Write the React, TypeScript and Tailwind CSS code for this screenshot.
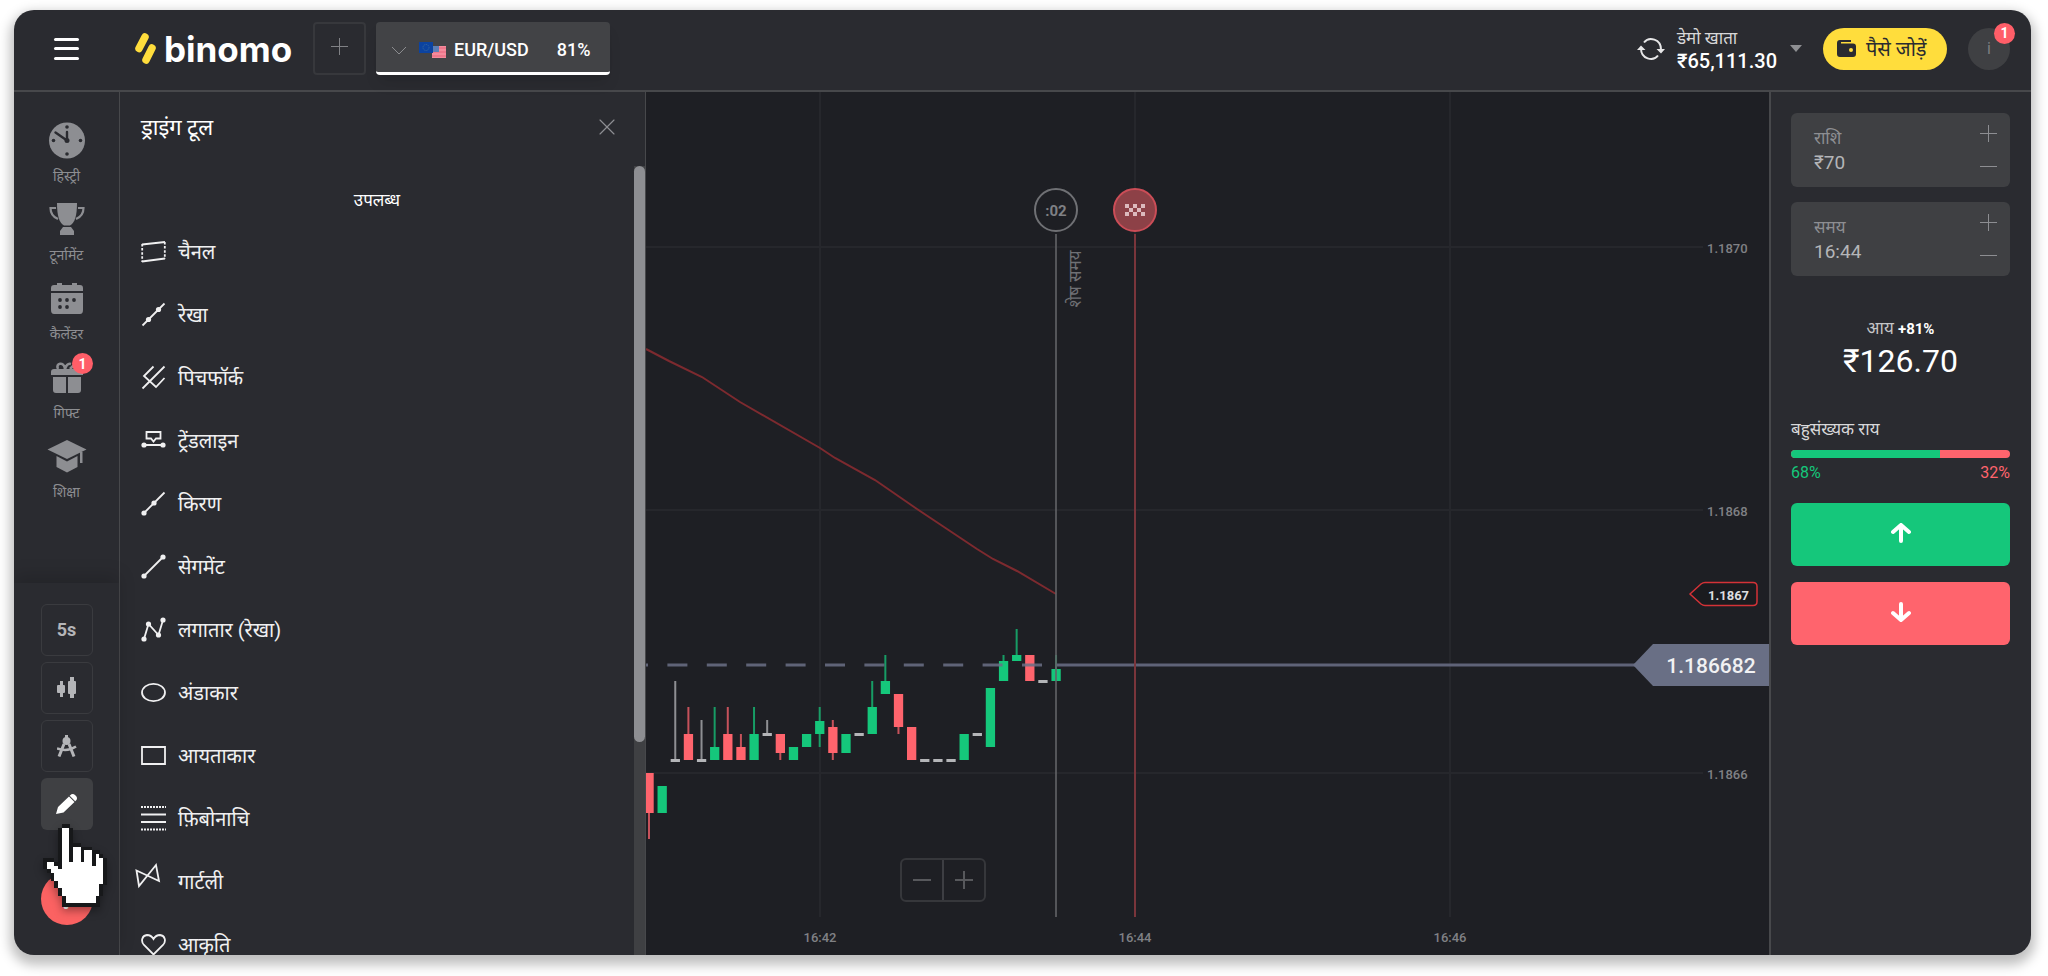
import React, { useState } from 'react';
import { FiX } from 'react-icons/fi';

type Candle = {
  color: 'up' | 'down' | 'flat';
  high: number;
  top: number;
  bottom: number;
  low: number;
};

const UP = '#15c77b';
const DOWN = '#ff646d';

const c = (
  color: Candle['color'],
  high: number,
  top: number,
  bottom: number,
  low: number
): Candle => ({ color, high, top, bottom, low });

const candles: Candle[] = [
  c('down', 681, 681, 721, 747),
  c('up', 694, 694, 721, 721),
  c('flat', 589, 668, 668, 668),
  c('down', 615, 642, 668, 668),
  c('flat', 628, 668, 668, 668),
  c('up', 615, 655, 668, 668),
  c('down', 615, 642, 668, 668),
  c('down', 642, 655, 668, 668),
  c('up', 615, 642, 668, 668),
  c('flat', 628, 642, 642, 642),
  c('down', 642, 642, 661, 668),
  c('up', 655, 655, 668, 668),
  c('up', 642, 642, 655, 655),
  c('up', 615, 629, 642, 655),
  c('down', 628, 635, 661, 668),
  c('up', 642, 642, 661, 661),
  c('flat', 642, 642, 642, 642),
  c('up', 589, 615, 642, 642),
  c('up', 563, 589, 602, 602),
  c('down', 602, 602, 635, 642),
  c('down', 635, 635, 668, 668),
  c('flat', 668, 668, 668, 668),
  c('flat', 668, 668, 668, 668),
  c('flat', 668, 668, 668, 668),
  c('up', 642, 642, 668, 668),
  c('flat', 642, 642, 642, 642),
  c('up', 596, 596, 655, 655),
  c('up', 563, 569, 589, 589),
  c('up', 537, 563, 569, 569),
  c('down', 563, 563, 589, 589),
  c('flat', 589, 589, 589, 589),
  c('up', 563, 577, 589, 589),
];

const candleColors = { up: UP, down: DOWN, flat: '#b4b5b8' };

const Dot = ({ x, y }: { x: number; y: number }) => (
  <circle cx={x} cy={y} r="2.6" fill="currentColor" stroke="none" />
);

const tools = [
  {
    name: 'चैनल',
    icon: (
      <>
        <path d="M1 5.5 24 3M1 22.5l23-3" />
        <path d="M1.2 5v18M23.8 3v17" strokeDasharray="2.5 1.6" />
      </>
    ),
  },
  {
    name: 'रेखा',
    icon: (
      <>
        <path d="M1.5 23.5l22-22" />
        <Dot x={7.5} y={17.5} />
        <Dot x={17.5} y={7.5} />
      </>
    ),
  },
  {
    name: 'पिचफॉर्क',
    icon: <path d="M1.5 23.5l22-22M12.5 1.5L3 11l12 11 8.500-9" />,
  },
  {
    name: 'ट्रेंडलाइन',
    icon: (
      <>
        <path d="M2 17h21M5.500 4h14v6.500h-4.500l-2.500 3-2.500-3h-4.500z" />
        <Dot x={3} y={17} />
        <Dot x={22} y={17} />
      </>
    ),
  },
  {
    name: 'किरण',
    icon: (
      <>
        <path d="M2.500 22.500l21-21" />
        <Dot x={3} y={22} />
        <Dot x={13} y={12} />
      </>
    ),
  },
  {
    name: 'सेगमेंट',
    icon: (
      <>
        <path d="M3 22L22 3" />
        <Dot x={3} y={22} />
        <Dot x={22} y={3} />
      </>
    ),
  },
  {
    name: 'लगातार (रेखा)',
    icon: (
      <>
        <path d="M3 22L7.500 7l10 11L22 3" />
        <Dot x={3} y={22} />
        <Dot x={7.5} y={7} />
        <Dot x={17.5} y={18} />
        <Dot x={22} y={3} />
      </>
    ),
  },
  { name: 'अंडाकार', icon: <ellipse cx="12.5" cy="12.5" rx="11.5" ry="8.700" /> },
  { name: 'आयताकार', icon: <path d="M1 4h23v17H1z" /> },
  {
    name: 'फ़िबोनाचि',
    icon: (
      <>
        <path d="M0 8.500h25M0 16h25" />
        <path d="M0 1h25M0 23.500h25" strokeDasharray="2 1" />
      </>
    ),
  },
  {
    name: 'गार्टली',
    icon: <path d="M-4.500 1.500L18 12 15-4-2 17z" strokeLinejoin="miter" />,
  },
  {
    name: 'आकृति',
    icon: (
      <path d="M12.500 22.500L3 13C-.5 9 1 3.500 6 3c3 0 5 1.500 6.500 4C14 4.500 16 3 19 3c5 .5 6.500 6 3 10z" />
    ),
  },
];

const menu = [
  {
    name: 'हिस्ट्री',
    badge: 0,
    icon: (
      <>
        <circle cx="20" cy="20.500" r="18" />
        <g fill="#2a2b30">
          <circle cx="20" cy="7" r="1.800" />
          <circle cx="20" cy="34" r="1.800" />
          <circle cx="6.500" cy="20.500" r="1.800" />
          <circle cx="33.500" cy="20.500" r="1.800" />
          <circle cx="20" cy="20.500" r="2.500" />
        </g>
        <path
          d="M20 20.500V12M20 20.500L8.500 12.500"
          stroke="#2a2b30"
          strokeWidth="2.400"
          strokeLinecap="round"
        />
      </>
    ),
  },
  {
    name: 'टूर्नामेंट',
    badge: 0,
    icon: (
      <>
        <path d="M10 4h20c0 12-2 20-7 22.500h-6C12 24 10 16 10 4z" />
        <path d="M16 28h8l3 4v4H13v-4z" />
        <path
          d="M9 9H3.500c0 6 2.500 9 7.500 11M31 9h5.500c0 6-2.500 9-7.500 11"
          fill="none"
          stroke="currentColor"
          strokeWidth="2.200"
        />
      </>
    ),
  },
  {
    name: 'कैलेंडर',
    badge: 0,
    icon: (
      <g transform="translate(0 2)">
        <path d="M4 11V8q0-3 3-3h3V3h5v2h10V3h5v2h3q3 0 3 3v3z" />
        <path d="M4 13h32v17q0 4-3 4H7q-3 0-3-4z" />
        <g fill="#2a2b30">
          <circle cx="13" cy="20" r="1.900" />
          <circle cx="20" cy="20" r="1.900" />
          <circle cx="27" cy="20" r="1.900" />
          <circle cx="13" cy="27" r="1.900" />
          <circle cx="20" cy="27" r="1.900" />
        </g>
      </g>
    ),
  },
  {
    name: 'गिफ्ट',
    badge: 1,
    icon: (
      <g transform="translate(0 2)">
        <path d="M4 16v-3q0-3 3-3h26q3 0 3 3v3z" />
        <path d="M6 18h13v16H9q-3 0-3-3zM21 18h13v13q0 3-3 3H21z" />
        <path
          d="M11 10C8 4 17 2 18 10c1-3 3-6 6-5M23 10l5-5"
          fill="none"
          stroke="currentColor"
          strokeWidth="2.600"
        />
      </g>
    ),
  },
  {
    name: 'शिक्षा',
    badge: 0,
    icon: (
      <g transform="translate(0 1)">
        <path d="M20 3l19.500 9.500L20 22 .5 12.500z" />
        <path d="M9.500 19L20 24.500 30.500 19v11L20 35.500 9.500 30z" />
        <path d="M33 15h2.500v11H33z" />
      </g>
    ),
  },
];

// # outline, . fill
const hand = [
  '     ##          ',
  '    #..#         ',
  '    #..#         ',
  '    #..#         ',
  '    #..#         ',
  '    #..###       ',
  '    #..#..###    ',
  '    #..#..#..##  ',
  '    #..#..#..#.# ',
  '### #..#..#..#..#',
  '#..##........#..#',
  '#...#...........#',
  ' #..............#',
  '  #.............#',
  '  #.............#',
  '   #............#',
  '   #...........# ',
  '    #..........# ',
  '    #..........# ',
  '     #........#  ',
  '     #........#  ',
  '     ##########  ',
];

const HandCursor = () => (
  <svg
    viewBox="0 0 17 22"
    shapeRendering="crispEdges"
    className="absolute left-[2px] top-[46px] z-10 h-[83px] w-16 pointer-events-none drop-shadow-[0_4px_4px_rgba(0,0,0,0.35)]"
  >
    {hand.map((row, y) =>
      row
        .split('')
        .map((cell, x) =>
          cell === ' ' ? null : (
            <rect
              key={`${x}-${y}`}
              x={x}
              y={y}
              width="1.05"
              height="1.05"
              fill={cell === '#' ? '#17181a' : '#ffffff'}
            />
          )
        )
    )}
  </svg>
);

const Badge = ({ className }: { className: string }) => (
  <span
    className={`absolute flex h-[21px] w-[21px] items-center justify-center rounded-full bg-[#ff5e68] text-sm font-bold text-white ${className}`}
  >
    1
  </span>
);

const Header = () => (
  <header className="flex h-[82px] shrink-0 items-center border-b-2 border-[#47484b] pr-[21px] pb-[3px] pl-10">
    <button aria-label="Menu" className="flex h-[22px] w-[25px] flex-col justify-between">
      <span className="h-[3px] w-full rounded-sm bg-white" />
      <span className="h-[3px] w-full rounded-sm bg-white" />
      <span className="h-[3px] w-full rounded-sm bg-white" />
    </button>
    <a href="#" className="ml-14 flex items-center gap-2">
      <svg viewBox="0 0 21 31" className="h-[31px] w-[21px]">
        <path
          d="M4 15.500L10 4M11 27l6-12"
          stroke="#ffdd3c"
          strokeWidth="7.500"
          strokeLinecap="round"
        />
      </svg>
      <span className="w-[129px] font-[Inter,sans-serif] text-[35px] leading-8 font-bold text-white">
        binomo
      </span>
    </a>
    <button
      aria-label="Add asset"
      className="ml-5 flex h-[53px] w-[53px] items-center justify-center rounded border-2 border-[#37383c] pb-1"
    >
      <svg viewBox="0 0 17 17" className="h-[17px] w-[17px]">
        <path d="M8.500 0v17M0 8.500h17" stroke="#808185" />
      </svg>
    </button>
    <button className="ml-[10px] flex h-[53px] w-[234px] items-center overflow-hidden rounded border-b-[3px] border-white bg-[#424346] pt-[6px] pl-4 text-lg font-medium text-white shadow-lg">
      <svg viewBox="0 0 14 9" className="h-[9px] w-[14px]" fill="none">
        <path d="M0 1l7 7 7-7" stroke="#8b8c8f" />
      </svg>
      <svg viewBox="0 0 27 16" className="ml-[13px] h-4 w-[27px]">
        <path d="M13 4h14v12H13z" fill="#f48b9c" />
        <path d="M13 6h14M13 10h14M13 14h14" stroke="#e8657d" />
        <path d="M13 4h7v6h-7z" fill="#5d7fb5" />
        <path d="M0 0h14v11H0z" fill="#0c43a0" />
        <circle cx="7" cy="5.500" r="3" fill="none" stroke="#3d6f9d" strokeDasharray="1 1" />
      </svg>
      <span className="ml-2">EUR/USD</span>
      <span className="ml-7">81%</span>
    </button>

    <svg viewBox="0 0 28 24" className="ml-auto h-6 w-7" fill="none">
      <path
        d="M7 5.500C12-1 24 2 24 12.500M21 18.500C16 25 4 22 4 11.500"
        stroke="#e6e6e7"
        strokeWidth="2"
      />
      <path d="M0 13l4-4.500L8.500 13zM19.500 12H28l-4 4.500z" fill="#e6e6e7" />
    </svg>
    <button className="ml-3 flex items-center text-left">
      <span className="flex flex-col">
        <span className="text-[17px] leading-6 text-[#d8d8d9]">डेमो खाता</span>
        <span className="text-xl leading-[22px] font-medium text-white">₹65,111.30</span>
      </span>
      <svg viewBox="0 0 12 7" className="ml-[13px] h-[7px] w-3">
        <path d="M0 0h12L6 7z" fill="#8e8f92" />
      </svg>
    </button>
    <button className="ml-[21px] flex h-[42px] w-[124px] items-center rounded-full bg-[#ffdd3c] pl-[14px] text-xl text-[#2a2b30]">
      <svg viewBox="0 0 19 17" className="mr-[10px] h-[17px] w-[19px]">
        <path d="M3 0h11v2H4v1.500h12q3 0 3 3V14q0 3-3 3H3q-3 0-3-3V3Q0 0 3 0z" fill="#2a2b30" />
        <circle cx="14" cy="10" r="2" fill="#ffdd3c" />
      </svg>
      पैसे जोड़ें
    </button>
    <button
      aria-label="Profile"
      className="relative ml-[21px] h-[42px] w-[42px] rounded-full bg-[#3f4043] text-base text-[#7d7e81]"
    >
      i
      <Badge className="-top-[5px] -right-[5px]" />
    </button>
  </header>
);

const Sidebar = () => {
  const box =
    'flex h-[52px] w-[52px] items-center justify-center rounded-md border border-[#3a3b3f] text-[#b4b5b8]';
  return (
    <aside className="flex w-[106px] shrink-0 flex-col justify-between border-r border-[#47484b]">
      <nav className="flex flex-col items-center pt-7">
        {menu.map((item) => (
          <a
            href="#"
            key={item.name}
            className="relative flex h-[79px] w-full flex-col items-center text-[#8d8e92]"
          >
            <svg viewBox="0 0 40 40" className="h-10 w-10" fill="currentColor">
              {item.icon}
            </svg>
            <span className="mt-1 text-sm leading-6">{item.name}</span>
            {item.badge > 0 && <Badge className="-top-1 right-[26px]" />}
          </a>
        ))}
      </nav>
      <div className="flex flex-col items-center gap-[6px] pt-[21px] pb-[30px] shadow-[0_-8px_16px_rgba(0,0,0,0.15)]">
        <button className={`${box} text-lg font-bold`}>5s</button>
        <button aria-label="Chart type" className={box}>
          <svg viewBox="0 0 20 22" className="h-[22px] w-5" fill="currentColor">
            <path d="M0 9q0-1 1-1h2V4h3v4h1q1 0 1 1v6q0 1-1 1H6v4H3v-4H1q-1 0-1-1zM11 5q0-1 1-1h1V0h4v4h1q1 0 1 1v11q0 1-1 1h-1v4h-4v-4h-1q-1 0-1-1z" />
          </svg>
        </button>
        <button aria-label="Indicators" className={box}>
          <svg viewBox="0 0 20 22" className="h-[22px] w-5" fill="none" stroke="currentColor">
            <path d="M8 0h3v3H8z" fill="currentColor" stroke="none" />
            <circle cx="9.500" cy="6" r="4" fill="currentColor" stroke="none" />
            <path d="M7 9L2 21.500M12 9l5 12.500" strokeWidth="3" />
            <path d="M0 13.500c6 2 13 2 19-2" strokeWidth="2.500" />
          </svg>
        </button>
        <button
          aria-label="Drawing tools"
          className="relative flex h-[52px] w-[52px] items-center justify-center rounded-md bg-[#3f4043] text-white"
        >
          <svg viewBox="0 0 22 20" className="h-5 w-[22px]" fill="currentColor">
            <path d="M0 20l2-7L13 2.500l5.500 5.500L7.500 18.500zM14 1.500q2.500-2.500 5-.5l1 1q2 2 0 4.500l-.8.8-5.500-5.500z" />
          </svg>
          <HandCursor />
        </button>
        <button
          aria-label="Help"
          className="mt-[37px] flex h-[52px] w-[52px] items-center justify-center rounded-full bg-[#fb6262] text-3xl font-bold text-white"
        >
          ?
        </button>
      </div>
    </aside>
  );
};

const ToolsPanel = ({ onClose }: { onClose: () => void }) => (
  <section className="flex w-[526px] shrink-0 flex-col border-r border-[#47484b]">
    <div className="flex h-[74px] shrink-0 items-center justify-between pr-6 pb-1 pl-[21px]">
      <h2 className="text-[22px] text-white">ड्राइंग टूल</h2>
      <button onClick={onClose} aria-label="Close" className="text-[#8d8e92]">
        <FiX size={28} strokeWidth={1} />
      </button>
    </div>
    <div className="flex min-h-0 flex-1">
      <div className="min-w-0 flex-1 overflow-hidden">
        <p className="pt-5 pb-[10px] text-center text-[17px] leading-7 text-white">उपलब्ध</p>
        <ul>
          {tools.map((tool) => (
            <li key={tool.name}>
              <button className="flex h-[63px] w-full items-center gap-3 pb-2 pl-[21px] text-left text-xl text-[#f0f0f1]">
                <svg
                  viewBox="0 0 25 25"
                  className="h-[25px] w-[25px] overflow-visible"
                  fill="none"
                  stroke="currentColor"
                  strokeWidth="1.800"
                >
                  {tool.icon}
                </svg>
                {tool.name}
              </button>
            </li>
          ))}
        </ul>
      </div>
      <div className="w-[11px] bg-[#3f4043]">
        <div className="h-[73%] rounded-full bg-[#8d8e92]" />
      </div>
    </div>
  </section>
);

const Chart = () => (
  <main className="relative min-w-0 flex-1 bg-[#1e1f24]">
    <svg
      viewBox="0 0 1123 863"
      preserveAspectRatio="xMaxYMin slice"
      className="absolute inset-0 h-full w-full"
      fontFamily="Roboto, 'Noto Sans', sans-serif"
    >
      <g stroke="#26272c" strokeWidth="2">
        <path d="M174 0v825M489 0v825M804 0v825" />
        <path d="M0 155h1057M0 418h1057M0 681h1057" />
      </g>
      <g fill="#808185" fontSize="13" fontWeight="500">
        <text x="1061" y="161">1.1870</text>
        <text x="1061" y="424">1.1868</text>
        <text x="1061" y="687">1.1866</text>
        <g textAnchor="middle">
          <text x="174" y="850">16:42</text>
          <text x="489" y="850">16:44</text>
          <text x="804" y="850">16:46</text>
        </g>
      </g>

      <polyline
        points="0,257 23,269 56,285 94,310 174,356 189,366 229,388 271,417 301,437 331,457 347,467 371,479 410,502"
        fill="none"
        stroke="#7d2a2f"
        strokeWidth="2"
      />

      {candles.map((item, i) => {
        const x = 3 + i * 13.13;
        const fill = candleColors[item.color];
        const flat = item.color === 'flat';
        return (
          <g key={i} fill={fill}>
            <rect x={x - 1} y={item.high} width="2" height={item.low - item.high} opacity="0.75" />
            <rect
              x={x - 4.6}
              y={flat ? item.top - 1 : item.top}
              width="9.3"
              height={flat ? 3 : item.bottom - item.top}
            />
          </g>
        );
      })}

      <path
        d="M-18 573H410"
        stroke="#6b7086"
        strokeWidth="3"
        strokeDasharray="20 19.4"
        opacity="0.85"
      />
      <path d="M410 573h580" stroke="#5f6378" strokeWidth="3" />
      <path d="M987 573l20-21h116v42h-116z" fill="#696f85" />
      <text x="1065" y="581" fontSize="21" fontWeight="500" fill="#f1f1f3" textAnchor="middle">
        1.186682
      </text>

      <path
        d="M1044 502l11-10q2-1.500 4-1.500h48q4 0 4 4v15q0 4-4 4h-48q-2 0-4-1.500z"
        fill="#1a1b1f"
        stroke="#d43237"
        strokeWidth="1.500"
      />
      <text x="1062" y="508" fontSize="13" fontWeight="700" fill="#dddddf">
        1.1867
      </text>

      <path d="M410 142v683" stroke="#626367" strokeWidth="2" opacity="0.8" />
      <circle cx="410" cy="118" r="21" fill="#1e1f24" stroke="#6f7074" strokeWidth="2" />
      <text x="410" y="124" fontSize="15" fontWeight="700" fill="#7f8084" textAnchor="middle">
        :02
      </text>
      <text
        transform="translate(435 187) rotate(-90)"
        fontSize="17"
        fill="#6f7074"
        textAnchor="middle"
      >
        शेष समय
      </text>

      <path d="M489 142v683" stroke="#7a353b" strokeWidth="2" />
      <circle cx="489" cy="118" r="21" fill="#8d4147" stroke="#cb4d57" strokeWidth="2" />
      <g fill="#dcb9bc">
        <path d="M479 112h4v4h-4zM487 112h4v4h-4zM495 112h4v4h-4zM483 116h4v4h-4zM491 116h4v4h-4zM479 120h4v4h-4zM487 120h4v4h-4zM495 120h4v4h-4z" />
      </g>
    </svg>

    <div className="absolute bottom-[53px] left-[254px] flex h-11 w-[86px] divide-x-2 divide-[#3d3e43] rounded-md border-2 border-[#36373b] text-[#57585c]">
      <button aria-label="Zoom out" className="flex flex-1 items-center justify-center">
        <svg viewBox="0 0 18 18" className="h-[18px] w-[18px]">
          <path d="M0 9h18" stroke="currentColor" strokeWidth="2" />
        </svg>
      </button>
      <button aria-label="Zoom in" className="flex flex-1 items-center justify-center">
        <svg viewBox="0 0 18 18" className="h-[18px] w-[18px]">
          <path d="M0 9h18M9 0v18" stroke="currentColor" strokeWidth="2" />
        </svg>
      </button>
    </div>
  </main>
);

const Field = ({ id, label, initial }: { id: string; label: string; initial: string }) => {
  const [value, setValue] = useState(initial);
  return (
    <div className="flex h-[74px] justify-between rounded-md bg-[#3f4043] py-3 pr-[13px] pl-[23px]">
      <div className="flex min-w-0 flex-1 flex-col">
        <label htmlFor={id} className="text-[17px] leading-[26px] text-[#8d8e92]">
          {label}
        </label>
        <input
          id={id}
          value={value}
          onChange={(e) => setValue(e.target.value)}
          className="w-full bg-transparent text-[19px] leading-6 text-[#b4b5b8] outline-none"
        />
      </div>
      <div className="flex flex-col justify-between text-[#8d8e92]">
        <button aria-label={`${label} +`}>
          <svg viewBox="0 0 17 17" className="h-[17px] w-[17px]">
            <path d="M8.500 0v17M0 8.500h17" stroke="currentColor" />
          </svg>
        </button>
        <button aria-label={`${label} −`}>
          <svg viewBox="0 0 17 17" className="h-[17px] w-[17px]">
            <path d="M0 8.500h17" stroke="currentColor" />
          </svg>
        </button>
      </div>
    </div>
  );
};

const TradePanel = () => {
  const majority = 68;
  return (
    <aside className="flex w-[262px] shrink-0 flex-col border-l-2 border-[#47484b] pt-[21px] pr-[21px] pl-5">
      <div className="flex flex-col gap-[15px]">
        <Field id="amount" label="राशि" initial="₹70" />
        <Field id="time" label="समय" initial="16:44" />
      </div>
      <p className="mt-10 text-center text-[17px] leading-6 text-[#c5c5c7]">
        आय <b className="text-[15px] text-white">+81%</b>
      </p>
      <p className="text-center text-[32px] leading-10 text-white">₹126.70</p>
      <p className="mt-9 text-[17px] leading-6 text-[#d8d8d9]">बहुसंख्यक राय</p>
      <div className="mt-[9px] flex h-2 overflow-hidden rounded-full bg-[#ff646d]">
        <div className="bg-[#15c77b]" style={{ width: `${majority}%` }} />
      </div>
      <div className="mt-[5px] flex justify-between text-base leading-5">
        <span className="text-[#15c77b]">{majority}%</span>
        <span className="text-[#ff646d]">{100 - majority}%</span>
      </div>
      <button
        aria-label="Up"
        className="mt-5 flex h-[63px] items-center justify-center rounded-md bg-[#15c77b] pb-1 text-white"
      >
        <svg viewBox="0 0 20 20" className="h-5 w-5" fill="none">
          <path
            d="M10 18V3M2 9l8-7 8 7"
            stroke="currentColor"
            strokeWidth="4"
            strokeLinecap="round"
          />
        </svg>
      </button>
      <button
        aria-label="Down"
        className="mt-4 flex h-[63px] items-center justify-center rounded-md bg-[#ff646d] pb-1 text-white"
      >
        <svg viewBox="0 0 20 20" className="h-5 w-5" fill="none">
          <path
            d="M10 2v15M2 11l8 7 8-7"
            stroke="currentColor"
            strokeWidth="4"
            strokeLinecap="round"
          />
        </svg>
      </button>
    </aside>
  );
};

export default function App() {
  const [toolsOpen, setToolsOpen] = useState(true);

  return (
    <div className="h-screen bg-white pt-[10px] pr-[17px] pb-[21px] pl-[14px] font-[Roboto,'Noto_Sans',sans-serif]">
      <div className="flex h-full flex-col overflow-hidden rounded-[20px] bg-[#2a2b30] shadow-[0_6px_12px_4px_rgba(0,0,0,0.25)]">
        <Header />
        <div className="flex min-h-0 flex-1">
          <Sidebar />
          {toolsOpen && <ToolsPanel onClose={() => setToolsOpen(false)} />}
          <Chart />
          <TradePanel />
        </div>
      </div>
    </div>
  );
}
